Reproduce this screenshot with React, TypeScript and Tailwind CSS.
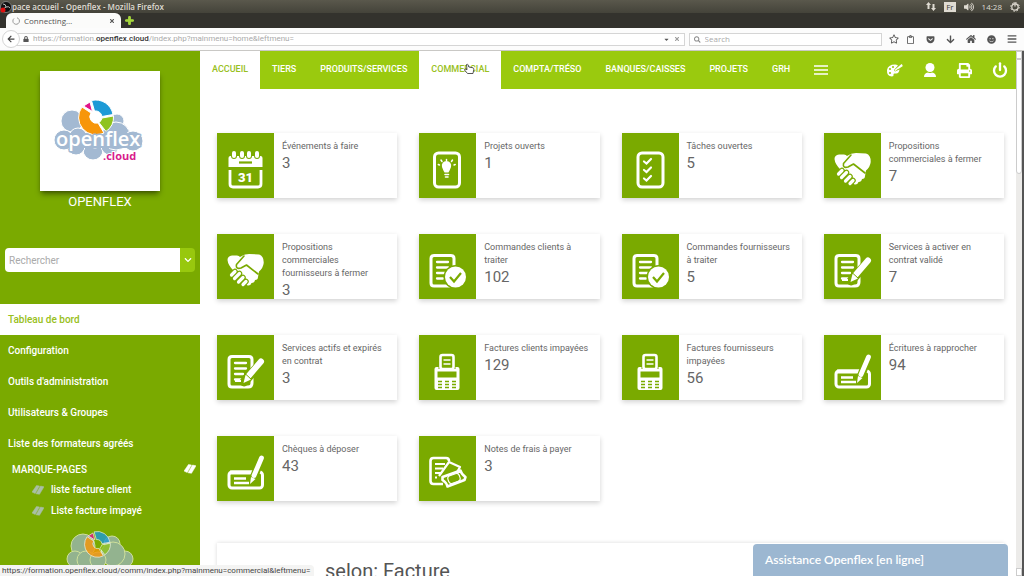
import { ReactNode, useState } from "react";
import { FaArrowDown, FaArrowLeft, FaBars, FaCaretDown, FaChevronDown, FaGetPocket, FaHome, FaLock, FaPlus, FaPrint, FaRegClipboard, FaRegStar, FaSearch, FaSmile, FaTimes, FaVolumeUp } from "react-icons/fa";
import { Power } from "lucide-react";

const GREEN = "#7aaa00";

const CalendarIcon = () => (
  <>
    <path d="M11.500 25q0-2 2-2h30q2 0 2 2v9h-34z" fill="#fff" />
    {[17, 25, 32, 40].map((x) => (
      <g key={x}>
        <rect x={x - 3} y="17" width="6" height="9" rx="3" fill={GREEN} />
        <rect x={x - 2} y="18" width="4" height="7" rx="2" fill="#fff" />
      </g>
    ))}
    <path d="M22 29.500h13" stroke={GREEN} strokeWidth="2.200" />
    <path d="M13 37v14q0 3 3 3h25q3 0 3-3V37" fill="none" stroke="#fff" strokeWidth="2.800" />
    <text x="28.5" y="49" textAnchor="middle" fontSize="13" fontWeight="900" fill="#fff" className="font-['Roboto',sans-serif]">31</text>
  </>
);

const ProjectIcon = () => (
  <g stroke="#fff" strokeLinecap="round">
    <rect x="15.500" y="20" width="25" height="34" rx="4" fill="none" strokeWidth="3" />
    <path d="M23 34a4.700 4.700 0 1 1 9 0q-1 3-2.500 5.500h-4Q24 37 23 34z" fill="#fff" stroke="none" />
    <path d="M26 41.500h3.500M26.500 44h2.500" strokeWidth="1.600" />
    <path d="M27.500 27.500v-1M23 28.500l-1-1.500M32.500 28.500l1-1.500M20.500 32l-1.200-.5M35 32l1.200-.5" strokeWidth="1.500" />
  </g>
);

const TaskIcon = () => (
  <g fill="none" stroke="#fff" strokeLinecap="round">
    <rect x="16" y="20" width="25" height="34" rx="4" strokeWidth="3" />
    <path d="M22 28.500l2.500 2 4.500-4.500M22 37l2.500 2 4.500-4.500M22 45.500l2.500 2 4.500-4.500" strokeWidth="2.200" />
  </g>
);

const HandshakeIcon = () => (
  <g strokeLinecap="round" strokeLinejoin="round" fill="none">
    <path d="M10.500 26q0-4 4.500-4.500h5q2 0 3 1.500Q27 20 32 20l10 .5q5 1.500 4.700 8.500-.5 5-4.700 8.500L41 43q0 3-3 3-.5 3-3.500 3-1 3-4 2.500L19 39l-3-3q-5-5-5.500-10z" fill="#fff" />
    <path d="M27 22l-7.500 8.500q-1 5 4.500 3.500l5.500-3L41 40" stroke={GREEN} strokeWidth="1.600" />
    <path d="M14.500 41l3.500-3.500M17.500 44.500l5-5M21.500 48l4.500-4.500M26 50.500l3-3" stroke={GREEN} strokeWidth="5.500" />
    <path d="M14.500 41l3.500-3.500M17.500 44.500l5-5M21.500 48l4.500-4.500M26 50.500l3-3" stroke="#fff" strokeWidth="3.200" />
  </g>
);

const Sheet = () => (
  <g fill="none" stroke="#fff" strokeLinecap="round">
    <path d="M29 52H15q-3 0-3-3V24.500q0-3 3-3h17q3 0 3 3V48q0 4-4 4z" strokeWidth="3" />
    <path d="M18 28h11M18 33.500h11M18 39h8M18 44.500h6" strokeWidth="2.300" />
  </g>
);

const OrderIcon = () => (
  <>
    <Sheet />
    <circle cx="36.500" cy="43" r="12" fill={GREEN} />
    <circle cx="36.500" cy="43" r="10.500" fill="#fff" />
    <path d="M31 43l4 4.500 7-8.500" fill="none" stroke={GREEN} strokeWidth="2.200" />
  </>
);

const ContractIcon = () => (
  <>
    <Sheet />
    <path d="M45 27L27 47" stroke={GREEN} strokeWidth="9" strokeLinecap="round" />
    <path d="M44 26.500L32 40.500" stroke="#fff" strokeWidth="6" strokeLinecap="round" />
    <path d="M28.500 40l5.500 4.500-7.500 3.500z" fill="#fff" />
    <path d="M28.500 39l6 5.500" stroke={GREEN} />
    <path d="M18 46h6" stroke="#fff" strokeWidth="2" />
  </>
);

const TerminalIcon = () => (
  <>
    <rect x="21.500" y="20" width="13" height="14" rx="2" fill="none" stroke="#fff" strokeWidth="2.600" />
    <path d="M24.500 25h7M24.500 29h7" stroke="#fff" strokeWidth="1.700" />
    <path d="M15.500 34q0-2 2-2h2v2h17v-2h2q2 0 2 2v19q0 2-2 2h-21q-2 0-2-2z" fill="#fff" />
    <path d="M18.500 36.500h19v6h-19z" fill={GREEN} />
    <path d="M19 46.500h18M19 49.500h18M19 52.500h18" stroke={GREEN} strokeWidth="1.400" strokeDasharray="4 3" />
  </>
);

const ChequeIcon = () => (
  <>
    <rect x="12" y="36" width="33.500" height="16" rx="3" fill="none" stroke="#fff" strokeWidth="3" />
    <path d="M13 36.500h24" stroke="#fff" strokeWidth="4" />
    <path d="M17 42.500h12M17 47h15" stroke="#fff" strokeWidth="2.400" />
    <path d="M44.500 21.500L35 46" stroke={GREEN} strokeWidth="8" />
    <path d="M44.500 22L37 39.500" stroke="#fff" strokeWidth="4.800" strokeLinecap="round" />
    <path d="M34 41l4.500 2-5.500 5z" fill="#fff" />
  </>
);

const ExpenseIcon = () => (
  <g fill="none" stroke="#fff">
    <path d="M24 48H14.500q-3 0-3-3V25q0-3 3-3H27q3 0 3 3" strokeWidth="2.600" />
    <path d="M16 28h10M16 32.500h8M16 37h6M16 41.500h2" strokeWidth="2" />
    <path d="M20 40l10-14 11 5-4 7" fill={GREEN} strokeWidth="2.200" strokeLinejoin="round" />
    <path d="M23.500 41l18-6.500q1 4 5 6.500l-1 3-17 6.500q-1-4-5-6.500z" fill={GREEN} strokeWidth="2.600" strokeLinejoin="round" />
    <rect x="29" y="38.500" width="12" height="8" rx="3" transform="rotate(-20 35 42.500)" strokeWidth="1.200" />
  </g>
);

type Card = { label: string; count: number; icon: () => ReactNode };

const cards: Card[] = [
  { label: "Événements à faire", count: 3, icon: CalendarIcon },
  { label: "Projets ouverts", count: 1, icon: ProjectIcon },
  { label: "Tâches ouvertes", count: 5, icon: TaskIcon },
  { label: "Propositions commerciales à fermer", count: 7, icon: HandshakeIcon },
  { label: "Propositions commerciales fournisseurs à fermer", count: 3, icon: HandshakeIcon },
  { label: "Commandes clients à traiter", count: 102, icon: OrderIcon },
  { label: "Commandes fournisseurs à traiter", count: 5, icon: OrderIcon },
  { label: "Services à activer en contrat validé", count: 7, icon: ContractIcon },
  { label: "Services actifs et expirés en contrat", count: 3, icon: ContractIcon },
  { label: "Factures clients impayées", count: 129, icon: TerminalIcon },
  { label: "Factures fournisseurs impayées", count: 56, icon: TerminalIcon },
  { label: "Écritures à rapprocher", count: 94, icon: ChequeIcon },
  { label: "Chèques à déposer", count: 43, icon: ChequeIcon },
  { label: "Notes de frais à payer", count: 3, icon: ExpenseIcon },
];

const tabs = ["ACCUEIL", "TIERS", "PRODUITS/SERVICES", "COMMERCIAL", "COMPTA/TRÉSO", "BANQUES/CAISSES", "PROJETS", "GRH"];
const menu = ["Tableau de bord", "Configuration", "Outils d'administration", "Utilisateurs & Groupes", "Liste des formateurs agréés"];
const bookmarks = ["liste facture client", "Liste facture impayé"];

function Donut() {
  return (
    <g stroke="#fff" strokeWidth="1">
      <path d="M51.500 29.500A17.500 17.500 0 0 1 73 43.500L62 45.500A6.500 6.500 0 0 0 54.500 40z" fill="#1d9ad6" />
      <path d="M73.500 45A17.500 17.500 0 0 1 66 60.500L59 51.500A6.500 6.500 0 0 0 62 47z" fill="#8fc31f" />
      <path d="M64 62A17.500 17.500 0 0 1 42 36L51 42A6.500 6.500 0 0 0 58 52z" fill="#f7960a" />
      <path d="M43.500 35L50 31l2.500 9.500z" fill="#e2148a" />
    </g>
  );
}

function Logo() {
  return (
    <svg viewBox="0 0 120 120" className="size-[120px]" role="img" aria-label="openflex.cloud">
      <g fill="#a3b9d2" stroke="#fff" strokeWidth="1">
        <circle cx="32" cy="50" r="11" />
        <circle cx="77" cy="50" r="7" />
        <circle cx="53" cy="79" r="10" />
        <circle cx="36" cy="75" r="9" />
        <circle cx="70" cy="75" r="9" />
        <circle cx="76" cy="65" r="14" />
        <circle cx="24" cy="69" r="10" />
        <circle cx="93" cy="70" r="10" />
        <circle cx="38" cy="66" r="9" />
        <circle cx="55" cy="67" r="10" />
      </g>
      <path d="M20 62h74v15H20z" fill="#a3b9d2" />
      <Donut />
      <g className="font-['Open_Sans',sans-serif]" fontWeight="600">
        <text x="16" y="75" fontSize="20" fill="#fff" stroke="#a3b9d2" strokeWidth="3" strokeLinejoin="round" paintOrder="stroke">openflex</text>
        <text x="63" y="89" fontSize="11" fontWeight="700" fill="#d81b8c" stroke="#fff" strokeWidth="2" paintOrder="stroke">.cloud</text>
      </g>
    </svg>
  );
}

function FooterCloud() {
  return (
    <svg viewBox="0 6 68 40" className="mx-auto mt-2 w-[68px] shrink-0" aria-hidden="true">
      <g fill="#93b38f" stroke="#cfe09b" strokeWidth="1">
        <circle cx="17" cy="23" r="12" />
        <circle cx="46" cy="21" r="8" />
        <circle cx="9" cy="36" r="8" />
        <circle cx="59" cy="36" r="8" />
        <circle cx="47" cy="31" r="12" />
        <circle cx="20" cy="37" r="9" />
        <circle cx="32" cy="37" r="8" />
      </g>
      <g transform="translate(-10 -13) scale(.74)" opacity=".8"><Donut /></g>
    </svg>
  );
}

const Tickets = ({ className }: { className: string }) => (
  <svg viewBox="0 0 12 10" className={`h-[10px] w-3 ${className}`} aria-hidden="true">
    <path d="M0 7L4.500.5 7.500 1 3.200 8.500zM4 8.800L8.500 1l3.500.8L7.500 9.300z" fill="currentColor" stroke="currentColor" strokeWidth=".5" strokeLinejoin="round" />
  </svg>
);

function BrowserBar() {
  return (
    <div className="shrink-0 font-['Open_Sans','Noto_Sans',sans-serif]">
      <div className="flex h-[13px] items-center bg-linear-to-b from-[#5a584c] to-[#44433a] pr-1 text-[#dfdbd2]">
        <svg viewBox="0 0 12 12" className="h-3 w-3 shrink-0" aria-hidden="true">
          <circle cx="6" cy="6" r="5.500" fill="#111" stroke="#aaa" strokeWidth=".6" />
          <path d="M3 3q3 0 3 3 3-1 4 1M6 6q-3 1-2 4" fill="none" stroke="#bbb" />
          <circle cx="3" cy="9" r="2.500" fill="#e01010" />
        </svg>
        <h1 className="flex-1 text-[8px] leading-3 font-semibold">pace accueil - Openflex - Mozilla Firefox</h1>
        <div className="flex items-center gap-2 text-[8px] leading-3">
          <svg viewBox="0 0 10 9" className="h-[9px] w-[10px]" aria-hidden="true">
            <path d="M2.500 0L5 3H3.500v4h-2V3H0zM7.500 9L5 6h1.500V2h2v4H10z" fill="currentColor" />
          </svg>
          <span className="bg-[#dfdbd2] px-[2px] leading-[10px] text-[#3c3b37]">Fr</span>
          <FaVolumeUp className="size-[10px]" />
          <span>14:28</span>
          <svg viewBox="0 0 10 10" className="size-[10px]" fill="none" stroke="currentColor" aria-hidden="true">
            <circle cx="5" cy="5" r="3.200" strokeWidth="1.200" />
            <circle cx="5" cy="5" r="4.300" strokeWidth="1" strokeDasharray="1.500 1.900" />
            <path d="M5 0v4.500" strokeWidth="1.200" />
          </svg>
        </div>
      </div>
      <div className="flex h-[15px] items-center bg-[#33322d] pl-[6px]">
        <div className="flex h-full w-[115px] items-center gap-1 rounded-t-md bg-[#fbfbfa] px-[6px] text-[8px] text-[#555]">
          <svg viewBox="0 0 8 8" className="size-2" fill="none" stroke="#999" aria-hidden="true">
            <path d="M2 1.500A3.300 3.300 0 1 0 5 .8" />
          </svg>
          <span className="flex-1">Connecting…</span>
          <button aria-label="Fermer l'onglet"><FaTimes className="size-[6px]" /></button>
        </div>
        <button aria-label="Nouvel onglet" className="ml-1 text-[#a5d63c]"><FaPlus className="size-[9px]" strokeWidth={60} stroke="currentColor" /></button>
      </div>
      <div className="flex h-[23px] items-center border-b border-[#c9c8c5] bg-[#fcfcfc] pr-[7px] text-[8px] text-[#555]">
        <button aria-label="Précédent" className="z-10 ml-[2px] flex size-[18px] items-center justify-center rounded-full border border-[#d5d5d5] bg-white text-[#444]">
          <FaArrowLeft className="size-2" />
        </button>
        <div className="-ml-1 flex h-[13px] flex-1 items-center border border-[#d5d5d5] bg-white pl-[6px]">
          <FaLock className="size-[6px]" />
          <span className="ml-1 flex-1 font-['Roboto',sans-serif] text-[#aaa]">
            https://formation.<b className="font-medium text-[#333]">openflex.cloud</b>/index.php?mainmenu=home&amp;leftmenu=
          </span>
          <FaCaretDown className="size-[7px]" />
          <FaTimes className="mx-1 size-[6px] text-[#999]" />
        </div>
        <label className="ml-1 flex h-[13px] w-[193px] items-center gap-1 border border-[#d5d5d5] bg-white px-1">
          <FaSearch className="size-[7px] text-[#888]" />
          <input aria-label="Search" placeholder="Search" className="w-full outline-none placeholder:text-[#aaa]" />
        </label>
        <div className="ml-[7px] flex items-center gap-[11px] text-[#555]">
          <button aria-label="Favori"><FaRegStar className="size-[10px]" /></button>
          <button aria-label="Marque-pages" className="-ml-1"><FaRegClipboard className="size-[9px]" /></button>
          <button aria-label="Pocket"><FaGetPocket className="size-[9px]" /></button>
          <button aria-label="Téléchargements"><FaArrowDown className="size-[9px]" /></button>
          <button aria-label="Accueil"><FaHome className="size-[10px]" /></button>
          <button aria-label="Hello"><FaSmile className="size-[9px]" /></button>
          <button aria-label="Menu"><FaBars className="size-[10px]" /></button>
        </div>
      </div>
    </div>
  );
}

function Sidebar() {
  const [search, setSearch] = useState("");

  return (
    <aside className="flex w-[200px] shrink-0 flex-col overflow-hidden bg-[#7aaa00] pt-5 text-[10px] text-white">
      <div className="mx-auto bg-white shadow-md shadow-black/40">
        <Logo />
      </div>
      <p className="mt-[3px] text-center text-[13px] leading-4">OPENFLEX</p>
      <form className="mx-[5px] mt-[38px] mb-8 flex h-6 shrink-0 overflow-hidden rounded-sm" onSubmit={(e) => e.preventDefault()}>
        <input
          aria-label="Rechercher"
          placeholder="Rechercher"
          value={search}
          onChange={(e) => setSearch(e.target.value)}
          className="min-w-0 flex-1 bg-white px-1 text-gray-700 outline-none placeholder:text-[#aaa]"
        />
        <button aria-label="Ouvrir la recherche" className="flex w-[15px] items-center justify-center bg-[#98c80e]">
          <FaChevronDown className="size-2" />
        </button>
      </form>
      <nav className="font-medium">
        {menu.map((item, i) => (
          <a key={item} href="#" className={`flex h-[31px] items-center px-2 ${i === 0 ? "bg-white text-[#98c020]" : ""}`}>
            {item}
          </a>
        ))}
      </nav>
      <div className="flex h-5 shrink-0 items-center justify-between pr-1 pl-3 font-medium">
        MARQUE-PAGES
        <Tickets className="text-white" />
      </div>
      {bookmarks.map((item) => (
        <a key={item} href="#" className="flex h-[21px] shrink-0 items-center gap-[7px] pl-8 font-medium">
          <Tickets className="text-[#a9bfa5]" />
          {item}
        </a>
      ))}
      <FooterCloud />
    </aside>
  );
}

function TopNav() {
  return (
    <header className="flex h-[38px] shrink-0 items-center bg-[#9aca0e] text-[9px] text-white">
      <nav className="flex h-full font-medium">
        {tabs.map((tab) => (
          <a
            key={tab}
            href="#"
            className={`relative flex items-center px-3 ${tab === "ACCUEIL" || tab === "COMMERCIAL" ? "bg-white text-[#98c020]" : ""}`}
          >
            {tab}
            {tab === "COMMERCIAL" && (
              <svg viewBox="0 0 12 12" className="absolute top-3 left-[44px] size-3" aria-hidden="true">
                <path d="M3.500 1.500q1-.8 1.500.3L5.800 4l4.200.8q1 .4.8 1.500L10 10.500H4.500L1.500 7q0-1.200 1.300-.8l1.200.6z" fill="#fff" stroke="#444" strokeWidth=".9" />
              </svg>
            )}
          </a>
        ))}
      </nav>
      <button aria-label="Plus" className="ml-3">
        <svg viewBox="0 0 14 10" className="h-[10px] w-[14px]"><path d="M0 1h14M0 5h14M0 9h14" stroke="#fff" strokeWidth="1.600" /></svg>
      </button>
      <div className="ml-auto flex items-center gap-5 pr-2">
        <button aria-label="Thème">
          <svg viewBox="0 0 17 14" className="h-[14px] w-[17px]">
            <path d="M9 1.500Q2 1.500 1 7q-.5 6 5 6.500 2 0 1.500-2 0-1.500 2-1 3.500.5 4-4L9 8.500 8 7l4-4.500Q10.500 1.500 9 1.500z" fill="#fff" />
            <path d="M9 7.500L16 1.500M12 5.500l4.500-3" stroke="#fff" strokeWidth="1.500" />
            <g fill="#9aca0e"><circle cx="4" cy="6" r="1.100" /><circle cx="7" cy="4" r="1.100" /><circle cx="4" cy="10" r="1.100" /></g>
          </svg>
        </button>
        <button aria-label="Utilisateur">
          <svg viewBox="0 0 14 14" className="size-[14px]">
            <circle cx="7" cy="4.500" r="4.500" fill="#fff" />
            <path d="M1 14q0-4 4-4.500 2 1 4 0 4 .5 4 4.500z" fill="#fff" />
          </svg>
        </button>
        <button aria-label="Imprimer"><FaPrint className="size-[15px]" /></button>
        <button aria-label="Déconnexion"><Power className="size-4" strokeWidth={3.5} /></button>
      </div>
    </header>
  );
}

function App() {
  return (
    <div className="relative flex h-screen flex-col overflow-hidden bg-white font-['Roboto',sans-serif]">
      <BrowserBar />
      <div className="flex min-h-0 flex-1">
        <Sidebar />
        <div className="flex min-w-0 flex-1 flex-col">
          <TopNav />
          <main className="min-h-0 flex-1 overflow-hidden pt-11 pr-3 pl-[17px]">
            <div className="grid grid-cols-4 gap-x-[22px] gap-y-9">
              {cards.map(({ label, count, icon: Icon }) => (
                <a key={label} href="#" className="flex h-[65px] bg-white text-[#666] shadow-[0_2px_5px_rgba(0,0,0,0.18)]">
                  <svg viewBox="0 0 57 65" className="w-[57px] shrink-0 bg-[#7aaa00]" aria-hidden="true">
                    <Icon />
                  </svg>
                  <div className="px-2 pt-[7px]">
                    <p className="text-[9px] leading-[13px]">{label}</p>
                    <p className="text-[15px] leading-[21px]">{count}</p>
                  </div>
                </a>
              ))}
            </div>
            <section className="mt-[42px] h-20 pt-[14px] pl-[108px] text-[#555] shadow-[0_0_4px_rgba(0,0,0,0.15)]">
              <h2 className="text-[20px] leading-7">selon: Facture</h2>
            </section>
          </main>
        </div>
        <div className="flex w-2 shrink-0 flex-col border-r-2 border-[#555] bg-[#ecebe9]" aria-hidden="true">
          <div className="h-2 border border-[#ccc] bg-white" />
          <div className="h-[115px] rounded-b-sm border border-[#ccc] bg-white" />
          <div className="mt-auto h-2 border border-[#ccc] bg-white" />
        </div>
      </div>
      <button className="absolute right-4 bottom-0 h-8 w-[255px] rounded-t-sm bg-[#9cb7d1] px-3 text-left font-['Lato',sans-serif] text-[12px] font-semibold text-white">
        Assistance Openflex [en ligne]
      </button>
      <div className="absolute bottom-0 left-0 h-[11px] rounded-tr-sm bg-[#f4f4f3] pr-1 pl-[2px] font-['Roboto',sans-serif] text-[8px] leading-[11px] text-[#444]">
        https://formation.openflex.cloud/comm/index.php?mainmenu=commercial&amp;leftmenu=
      </div>
    </div>
  );
}

export default App;
